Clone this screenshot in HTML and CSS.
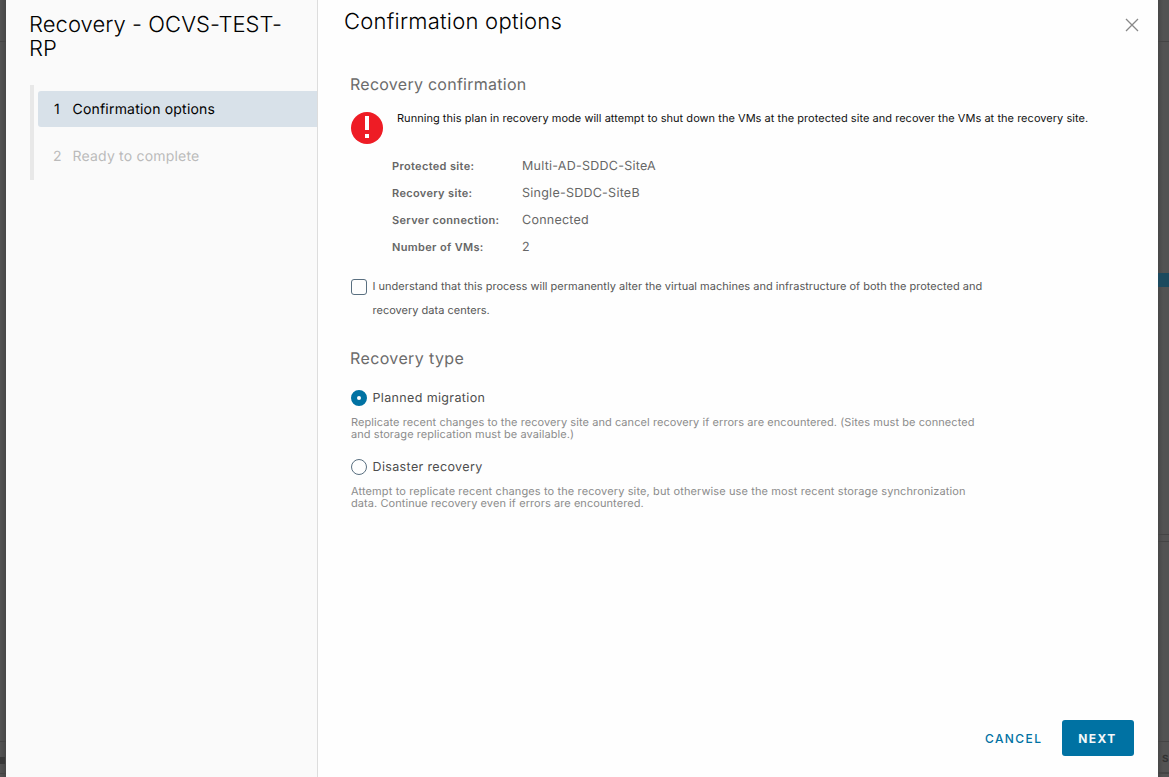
FILE: index.html
```html
<!DOCTYPE html>
<html lang="en">
<head>
<meta charset="utf-8">
<title>Recovery - OCVS-TEST-RP</title>
<link rel="stylesheet" href="styles.css">
</head>
<body>
<div class="backdrop">
  <div class="edge edge-left"><i class="rule left-top"></i><i class="rule left-low"></i><i class="rule left-tab"></i><i class="rule left-foot"></i></div>
  <div class="wizard">
    <nav class="sidebar">
      <h1 class="plan-title"><span>Recovery - OCVS-TEST-</span><br><span>RP</span></h1>
      <ol class="steps">
        <li class="step active"><span class="num first">1</span><span class="label-one">Confirmation options</span></li>
        <li class="step disabled"><span class="num">2</span><span class="label-two">Ready to complete</span></li>
      </ol>
    </nav>
    <main class="content">
      <header class="header">
        <h2 class="page-title"><span>Confirmation options</span></h2>
        <svg class="close" viewBox="0 0 14 14"><path d="M1 1L13 13M13 1L1 13"/></svg>
      </header>
      <section class="body">
        <h3 class="section-title"><span>Recovery confirmation</span></h3>
        <div class="warning">
          <svg class="alert" viewBox="0 0 32 32"><circle cx="16" cy="16" r="16" fill="#ee1c25"/><path d="M14 4h4v14h-4zM14 22h4v4h-4z" fill="#fff"/></svg>
          <p><span class="warning-text">Running this plan in recovery mode will attempt to shut down the VMs at the protected site and recover the VMs at the recovery site.</span></p>
        </div>
        <dl class="details">
          <dt><span>Protected site:</span></dt><dd><span>Multi-AD-SDDC-SiteA</span></dd>
          <dt><span>Recovery site:</span></dt><dd><span>Single-SDDC-SiteB</span></dd>
          <dt><span>Server connection:</span></dt><dd><span>Connected</span></dd>
          <dt><span>Number of VMs:</span></dt><dd><span>2</span></dd>
        </dl>
        <label class="consent">
          <i class="checkbox"></i>
          <span class="consent-text">I understand that this process will permanently alter the virtual machines and infrastructure of both the protected and<br>recovery data centers.</span>
        </label>
        <h3 class="section-title type-title"><span>Recovery type</span></h3>
        <div class="option"><i class="radio checked"></i><span>Planned migration</span></div>
        <p class="hint">Replicate recent changes to the recovery site and cancel recovery if errors are encountered. (Sites must be connected<br>and storage replication must be available.)</p>
        <div class="option"><i class="radio"></i><span>Disaster recovery</span></div>
        <p class="hint disaster-hint">Attempt to replicate recent changes to the recovery site, but otherwise use the most recent storage synchronization<br><span class="hint-tail">data. Continue recovery even if errors are encountered.</span></p>
      </section>
      <footer class="footer">
        <button class="cancel"><span>CANCEL</span></button>
        <button class="next"><span>NEXT</span></button>
      </footer>
    </main>
  </div>
  <div class="edge edge-right"><i class="rule right-top"></i><i class="accent"></i><i class="rule right-mid"></i><i class="rule right-mid second"></i><i class="rule right-low"></i><i class="rule right-foot"></i><span class="behind">S</span></div>
</div>
</body>
</html>
```
FILE: styles.css
```css
* { box-sizing: border-box; }
body { margin: 0; font-family: Inter, "Liberation Sans", sans-serif; overflow: hidden; text-rendering: geometricPrecision; }
h1, h2, h3, p, ol, dl, dd { margin: 0; padding: 0; }
.backdrop { display: flex; width: 1169px; height: 777px; background: #505050; }
.edge { position: relative; overflow: hidden; flex: none; }
.edge-left { width: 6px; background: linear-gradient(90deg, #535353, #474747); }
.edge-right { width: 11px; background: linear-gradient(90deg, #474747, #535353 5px); }
.rule { position: absolute; left: 0; width: 100%; height: 1px; background: #444; }
.left-top, .right-top { top: 41px; }
.left-low { top: 741px; }
.left-tab { top: 757px; height: 7px; width: 5px; background: #383838; }
.left-foot { top: 773px; }
.accent { position: absolute; left: 0; top: 273px; width: 100%; height: 14px; background: #1d4a5e; }
.right-mid { top: 534px; }
.right-mid.second { top: 541px; }
.right-low { top: 741px; }
.right-foot { top: 772px; height: 2px; }
.behind { position: absolute; left: 4px; top: 752px; font: bold 10px/14px Inter, sans-serif; color: #333; }
.wizard { display: flex; width: 1152px; height: 777px; background: #fefefe; }
.sidebar { width: 312px; flex: none; background: #fafafa; border-right: 1px solid #ddd; padding: 13px 0 0 23px; }
.plan-title, .page-title { font-size: 22px; font-weight: 300; line-height: 24px; color: #000; white-space: nowrap; }
.plan-title { letter-spacing: .06px; }
.page-title { letter-spacing: .24px; }
.steps { list-style: none; margin: 24px 0 0 1px; padding: 6px 0 6px 4px; border-left: 4px solid #e8e8e8; height: 95px; }
.step { display: flex; height: 36px; align-items: center; font-size: 14px; letter-spacing: .2px; border-radius: 3px 0 0 3px; padding: 0 0 0 15px; white-space: nowrap; }
.num { width: 19.5px; }
.num.first { padding-left: 1px; }
.active { background: #d8e1e9; color: #000; }
.disabled { margin-top: 11px; color: #bbb; }
.content { flex: 1; display: flex; flex-direction: column; min-width: 0; }
.header { display: flex; justify-content: space-between; padding: 10px 19px 0 26px; height: 72px; }
.close { width: 14px; height: 14px; margin-top: 8px; fill: none; stroke: #888; stroke-width: 1.3; }
.body { flex: 1; padding-left: 33px; }
.section-title { margin-left: -1px; font-size: 16px; line-height: 24px; font-weight: 400; letter-spacing: .26px; color: #6b6b6b; }
.warning { display: flex; margin-top: 16px; }
.alert { width: 32px; height: 32px; }
.warning p { margin-left: 14px; margin-top: -2px; font-size: 11px; line-height: 16px; letter-spacing: .035px; white-space: nowrap; color: #111; }
.details { display: grid; grid-template-columns: 130px 1fr; grid-auto-rows: 27px; align-items: center; margin: 8px 0 0 41px; white-space: nowrap; color: #666; }
dt { font-size: 11px; font-weight: 600; letter-spacing: .34px; }
dd { font-size: 12.5px; letter-spacing: .25px; padding-top: 2px; }
.consent { display: flex; margin-top: 13px; color: #565656; }
.checkbox { width: 16px; height: 16px; margin: 6px 5.5px 0 0; border: 1px solid #596f80; border-radius: 3px; flex: none; }
.consent-text { font-size: 11px; line-height: 24px; margin-top: 1px; letter-spacing: .01px; white-space: nowrap; }
.type-title { margin-top: 24px; letter-spacing: .38px; }
.option { display: flex; align-items: center; height: 24px; margin-top: 16px; font-size: 12.5px; letter-spacing: .36px; color: #4d4d4d; }
.option span { margin-top: 1px; }
.radio { width: 16px; height: 16px; border: 1px solid #596f80; border-radius: 50%; margin-right: 5.5px; }
.radio.checked { border: 6px solid #0072a3; }
.hint { margin-top: 6px; font-size: 11px; line-height: 12px; letter-spacing: .068px; color: #8c8c8c; white-space: nowrap; }
.disaster-hint { letter-spacing: .12px; }
.hint-tail { letter-spacing: .07px; }
.hint + .option { margin-top: 15px; }
.footer { display: flex; justify-content: flex-end; padding: 0 24px 21px 0; }
button { border: 0; background: none; padding: 0; font-family: inherit; font-size: 12px; height: 36px; letter-spacing: 1.4px; }
.cancel { width: 57px; margin-right: 20px; text-align: left; color: #0072a3; font-weight: 500; }
.next { width: 72px; background: #0072a3; color: #f4f8fa; border-radius: 3px; font-weight: 700; padding-right: 1px; }
```
